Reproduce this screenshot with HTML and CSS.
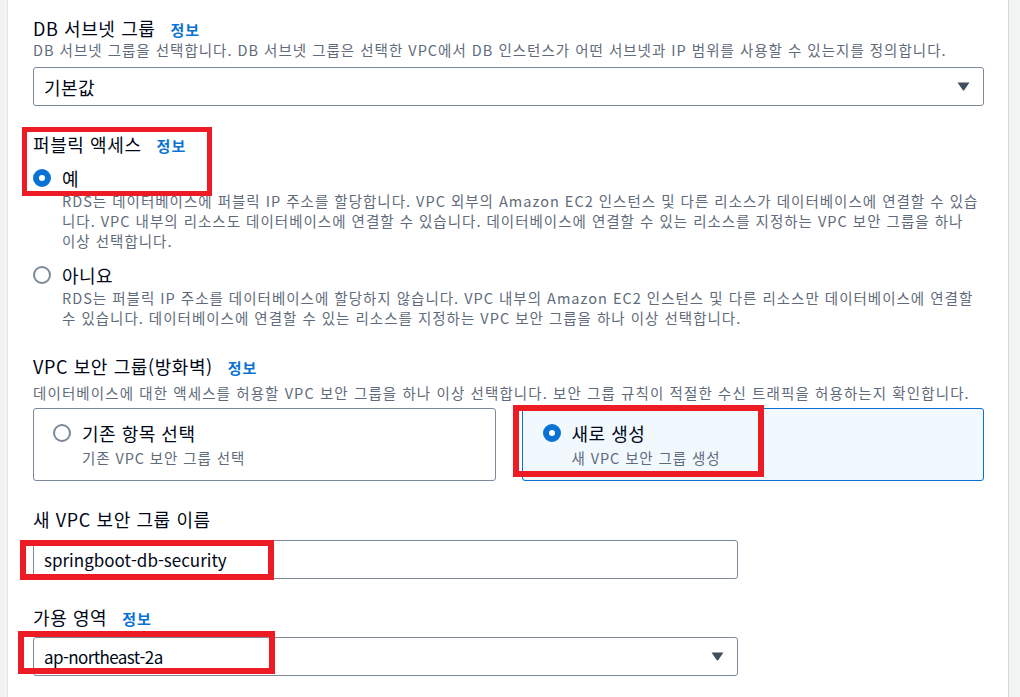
FILE: index.html
```html
<!DOCTYPE html>
<html lang="ko">
<head>
<meta charset="utf-8">
<link rel="stylesheet" href="styles.css">
</head>
<body>
<div class="page">
  <main class="panel">
    <section class="field first">
      <div class="label">DB 서브넷 그룹<a class="info">정보</a></div>
      <p class="desc">DB 서브넷 그룹을 선택합니다. DB 서브넷 그룹은 선택한 VPC에서 DB 인스턴스가 어떤 서브넷과 IP 범위를 사용할 수 있는지를 정의합니다.</p>
      <div class="select wide">
        <span class="value">기본값</span>
        <svg class="caret" width="13" height="9" viewBox="0 0 13 9"><path d="M0.5 0.5 H12.5 L7.3 8 Q6.5 9 5.7 8 Z" fill="#414d5c"/></svg>
      </div>
    </section>

    <section class="field">
      <div class="label">퍼블릭 액세스<a class="info">정보</a></div>
      <div class="radio-row">
        <span class="radio on"></span>
        <span class="radio-label">예</span>
      </div>
      <p class="desc indent"><span class="line">RDS는 데이터베이스에 퍼블릭 IP 주소를 할당합니다. VPC 외부의 Amazon EC2 인스턴스 및 다른 리소스가 데이터베이스에 연결할 수 있습</span><span class="line">니다. VPC 내부의 리소스도 데이터베이스에 연결할 수 있습니다. 데이터베이스에 연결할 수 있는 리소스를 지정하는 VPC 보안 그룹을 하나</span><span class="line">이상 선택합니다.</span></p>
      <div class="radio-row second">
        <span class="radio"></span>
        <span class="radio-label">아니요</span>
      </div>
      <p class="desc indent"><span class="line">RDS는 퍼블릭 IP 주소를 데이터베이스에 할당하지 않습니다. VPC 내부의 Amazon EC2 인스턴스 및 다른 리소스만 데이터베이스에 연결할</span><span class="line">수 있습니다. 데이터베이스에 연결할 수 있는 리소스를 지정하는 VPC 보안 그룹을 하나 이상 선택합니다.</span></p>
    </section>

    <section class="field">
      <div class="label">VPC 보안 그룹(방화벽)<a class="info">정보</a></div>
      <p class="desc vpc">데이터베이스에 대한 액세스를 허용할 VPC 보안 그룹을 하나 이상 선택합니다. 보안 그룹 규칙이 적절한 수신 트래픽을 허용하는지 확인합니다.</p>
      <div class="cards">
        <div class="card">
          <span class="radio"></span>
          <div class="card-text">
            <div class="card-title">기존 항목 선택</div>
            <div class="card-sub">기존 VPC 보안 그룹 선택</div>
          </div>
        </div>
        <div class="card active">
          <span class="radio on"></span>
          <div class="card-text">
            <div class="card-title">새로 생성</div>
            <div class="card-sub">새 VPC 보안 그룹 생성</div>
          </div>
        </div>
      </div>
    </section>

    <section class="field">
      <div class="label">새 VPC 보안 그룹 이름</div>
      <div class="input">springboot-db-security</div>
    </section>

    <section class="field">
      <div class="label">가용 영역<a class="info">정보</a></div>
      <div class="select half">
        <span class="value latin">ap-northeast-2a</span>
        <svg class="caret" width="13" height="9" viewBox="0 0 13 9"><path d="M0.5 0.5 H12.5 L7.3 8 Q6.5 9 5.7 8 Z" fill="#414d5c"/></svg>
      </div>
    </section>

    <div class="mark m1"></div>
    <div class="mark m2"></div>
    <div class="mark m3"></div>
    <div class="mark m4"></div>
  </main>
</div>
</body>
</html>
```

FILE: styles.css
```css
* { box-sizing: border-box; }

html, body {
  margin: 0;
  padding: 0;
  height: 100%;
}

body {
  background: #f2f3f3;
  font-family: "Noto Sans CJK KR", "Noto Sans", sans-serif;
  color: #000716;
  overflow: hidden;
}

.page {
  display: flex;
  height: 697px;
  padding-left: 7px;
  padding-right: 11px;
}

.panel {
  position: relative;
  width: 1002px;
  background: #ffffff;
  border-left: 1px solid #e3e5e7;
  border-right: 1px solid #d5d7da;
  padding: 17px 24px 0 25px;
}

.field { margin-top: 27px; }
.field.first { margin-top: 0; }

.label {
  font-size: 18px;
  letter-spacing: 0.6px;
  line-height: 22px;
  height: 22px;
  color: #000716;
  white-space: nowrap;
}

.info {
  color: #0972d3;
  font-weight: 700;
  font-size: 15px;
  letter-spacing: 1px;
  margin-left: 15px;
}

.desc {
  margin: 1px 0 0;
  font-size: 14.5px;
  letter-spacing: 1px;
  line-height: 20px;
  color: #5f6b7a;
  white-space: nowrap;
}

.desc.indent { padding-left: 29px; margin-top: 2px; }
.desc.vpc { margin-top: 6px; letter-spacing: 1.1px; }
.desc .line { display: block; }

.select, .input {
  height: 39px;
  border: 1px solid #7d8998;
  border-radius: 3px;
  display: flex;
  align-items: center;
  padding: 0 13px 0 10px;
  font-size: 17px;
  color: #000716;
  background: #fff;
}

.select { justify-content: space-between; }
.select.wide { margin-top: 7px; font-size: 18px; letter-spacing: 0.5px; }
.select.half { width: 705px; margin-top: 9px; }
.input { width: 705px; margin-top: 10px; }
.value { line-height: 22px; }
.value.latin { letter-spacing: -0.6px; }

.radio-row {
  display: flex;
  align-items: center;
  gap: 11px;
  margin-top: 12px;
  height: 22px;
}
.radio-row.second { margin-top: 13px; }

.radio-label { font-size: 18px; letter-spacing: 0.5px; line-height: 22px; }

.radio {
  width: 18px;
  height: 18px;
  border-radius: 50%;
  border: 2px solid #7d8998;
  background: #fff;
  flex: 0 0 auto;
}
.radio.on {
  border: 6px solid #0972d3;
}

.cards {
  display: grid;
  grid-template-columns: 1fr 1fr;
  gap: 26px;
  margin-top: 5px;
}

.card {
  height: 73px;
  border: 1px solid #7d8998;
  border-radius: 3px;
  display: flex;
  align-items: flex-start;
  gap: 11px;
  padding: 14px 0 0 19px;
}
.card .radio { margin-top: 1px; }
.card.active {
  border-color: #0972d3;
  background: #f1f8fe;
  padding-left: 20px;
}

.card-title { font-size: 18px; letter-spacing: 0.5px; line-height: 20px; }
.card-sub {
  font-size: 14.5px;
  letter-spacing: 0.9px;
  line-height: 20px;
  color: #5f6b7a;
  margin-top: 5px;
}

.mark {
  position: absolute;
  border: 5px solid #ed1c24;
  pointer-events: none;
}
.m1 { left: 14px; top: 127px; width: 190px; height: 69px; }
.m2 { left: 505px; top: 405px; width: 251px; height: 72px; border-width: 6px; }
.m3 { left: 12px; top: 540px; width: 254px; height: 40px; border-width: 6px; }
.m4 { left: 10px; top: 631px; width: 257px; height: 43px; border-width: 6px; }
```
